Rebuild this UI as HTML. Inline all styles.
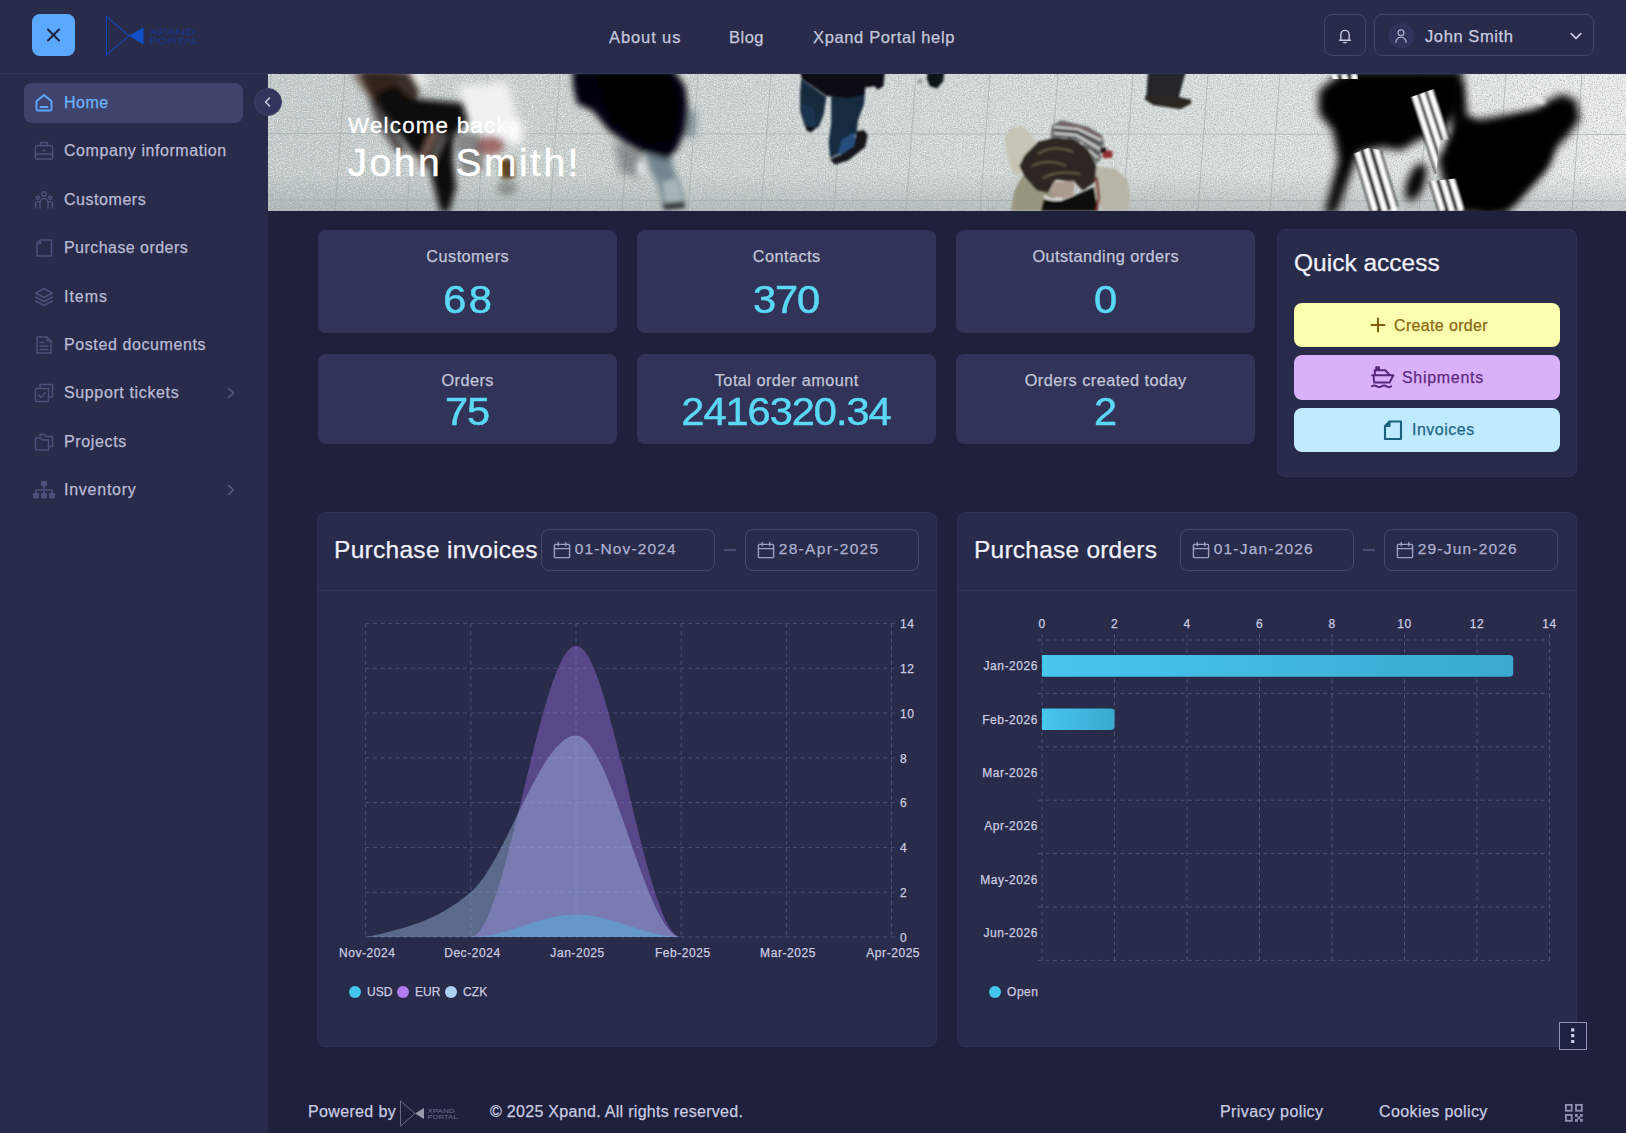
<!DOCTYPE html>
<html lang="en">
<head>
<meta charset="utf-8">
<title>Xpand Portal</title>
<style>
*{box-sizing:border-box;margin:0;padding:0}
html,body{width:1626px;height:1133px;overflow:hidden;background:#1e203c;font-family:"Liberation Sans",sans-serif;color:#c9cbe0;-webkit-text-stroke:.25px}
.abs{position:absolute}
#header{position:absolute;left:0;top:0;width:1626px;height:74px;background:#292b4b;border-bottom:1px solid #30325a}
#sidebar{z-index:3;position:absolute;left:0;top:74px;width:268px;height:1059px;background:#292b4b}
#closebtn{position:absolute;left:32px;top:14px;width:43px;height:42px;border-radius:8px;background:#5aa9ff}
.nav{position:absolute;top:27.6px;font-size:16.5px;color:#c5c7dc;letter-spacing:.2px;white-space:nowrap}
.mi{position:absolute;left:24px;width:219px;height:40px;border-radius:8px;font-size:16px;color:#b9bbd5;white-space:nowrap}
.mi span{position:absolute;left:40px;top:11px}
.mi svg.ic{position:absolute;left:9px;top:9px}
.mi svg.ch{position:absolute;left:201px;top:13px}
.mi.act{background:#40446d;color:#6cb4ff}
#banner{position:absolute;left:268px;top:74px;width:1358px;height:137px;overflow:hidden;background:#cfd4d2}
.card{position:absolute;background:#313458;border-radius:8px;text-align:center;width:299px}
.card .l{position:absolute;left:0;right:0;font-size:16.3px;color:#c3c5da;letter-spacing:.45px;text-indent:.45px}
.card .v{position:absolute;left:0;right:0;font-size:38.5px;color:#5ad8f5;-webkit-text-stroke:.55px #5ad8f5;transform:scaleX(1.08);transform-origin:50% 50%}
.panel{position:absolute;background:#292b4b;border:1px solid #2f3254;border-radius:8px}
.qb{position:absolute;left:1294px;width:266px;height:44.4px;border-radius:8px;font-size:16px;white-space:nowrap}
.ptitle{position:absolute;margin-top:.6px;font-size:24.5px;color:#f0f1fa;white-space:nowrap}
.date{position:absolute;top:529px;width:174px;height:42px;border:1px solid #45486f;border-radius:8px;font-size:15.5px;color:#adb0cf}
.date span{position:absolute;left:32.700px;top:10px;white-space:nowrap}
.date svg{position:absolute;left:10.500px;top:11.300px}
.foot{position:absolute;top:1103.2px;font-size:16px;color:#c9cbe0;white-space:nowrap}
</style>
</head>
<body>
<div id="header">
<div id="closebtn"><svg width="43" height="42" viewBox="0 0 43 42"><path d="M16 15.5 L27 26.5 M27 15.5 L16 26.5" stroke="#1e2340" stroke-width="2.1" stroke-linecap="round" fill="none"/></svg></div>
<svg class="abs" style="left:104px;top:14px" width="100" height="44" viewBox="0 0 100 44">
<path d="M2.5 2.5 L2.5 41 L25 21.8 Z" fill="none" stroke="#1046b8" stroke-width="1.1"/>
<path d="M25 21.8 L39.5 13.5 L39.5 30.5 Z" fill="#0f4fc8"/>
<text x="45.5" y="20.6" font-family="Liberation Sans, sans-serif" font-size="8.6" fill="#13368e" textLength="46" lengthAdjust="spacingAndGlyphs">XPAND</text>
<text x="45.5" y="30.2" font-family="Liberation Sans, sans-serif" font-size="8.6" fill="#13368e" textLength="50" lengthAdjust="spacingAndGlyphs">PORTAL</text>
</svg>
<div class="nav" style="left:609px;letter-spacing:.9px">About us</div>
<div class="nav" style="left:729px;letter-spacing:.5px">Blog</div>
<div class="nav" style="left:813px;letter-spacing:.64px">Xpand Portal help</div>
<div class="abs" style="left:1324px;top:14px;width:42px;height:42px;border:1px solid #43466c;border-radius:8px">
<svg width="40" height="40" viewBox="0 0 40 40"><path d="M14.6 25.2 H25.4 M15.9 25 V19.5 A4.1 4.1 0 0 1 24.1 19.500 V25 M18.6 27.6 H21.4" fill="none" stroke="#c9cbe0" stroke-width="1.4" stroke-linecap="round" stroke-linejoin="round"/></svg></div>
<div class="abs" style="left:1374px;top:14px;width:220px;height:42px;border:1px solid #43466c;border-radius:8px">
<div class="abs" style="left:13px;top:8px;width:26px;height:26px;border-radius:13px;background:#30335a"></div>
<svg class="abs" style="left:13px;top:8px" width="26" height="26" viewBox="0 0 26 26"><circle cx="13" cy="9.800" r="2.9" fill="none" stroke="#a9acc8" stroke-width="1.3"/><path d="M7.9 19.2 A5.1 5.1 0 0 1 18.1 19.2" fill="none" stroke="#a9acc8" stroke-width="1.3" stroke-linecap="round"/></svg>
<div class="abs" style="left:50px;top:11.6px;font-size:16.5px;color:#c9cbe0;letter-spacing:.6px;white-space:nowrap">John Smith</div>
<svg class="abs" style="left:194px;top:15px" width="14" height="12" viewBox="0 0 14 12"><path d="M2.2 3.600 L7 8.4 L11.8 3.600" fill="none" stroke="#c9cbe0" stroke-width="1.7" stroke-linecap="round" stroke-linejoin="round"/></svg>
</div>
</div>
<div id="sidebar">
<div class="mi act" style="top:9.0px"><svg class="ic" width="22" height="22" viewBox="0 0 22 22" fill="none" stroke="#5aa9ff" stroke-width="1.9" stroke-linejoin="round" stroke-linecap="round"><path d="M3.5 9.300 L11 3 L18.5 9.300 V17.2 A1.300 1.300 0 0 1 17.2 18.500 H4.800 A1.300 1.300 0 0 1 3.500 17.2 Z"/><path d="M7.5 15 H14.5"/></svg><span style="letter-spacing:0.5px">Home</span></div>
<div class="mi" style="top:57.4px"><svg class="ic" width="22" height="22" viewBox="0 0 22 22" fill="none" stroke="#4d5079" stroke-width="1.5" stroke-linejoin="round" stroke-linecap="round" ><rect x="2.500" y="5.700" width="17" height="13.300" rx=".8"/><path d="M7.500 5.700 V2.500 H14.500 V5.700 M2.500 14 H19.500 M10 10.500 H12"/></svg><span style="letter-spacing:0.56px">Company information</span></div>
<div class="mi" style="top:105.8px"><svg class="ic" width="22" height="22" viewBox="0 0 22 22" fill="none" stroke="#4d5079" stroke-width="1.5" stroke-linejoin="round" stroke-linecap="round" ><circle cx="11" cy="5" r="2.200"/><circle cx="4.800" cy="8.800" r="1.600"/><circle cx="17.2" cy="8.800" r="1.600"/><path d="M7 19 V13.500 A4 4 0 0 1 15 13.500 V19 M2.500 19 V15 A2.300 2.300 0 0 1 5.800 12.800 M19.500 19 V15 A2.300 2.300 0 0 0 16.200 12.800"/></svg><span style="letter-spacing:0.55px">Customers</span></div>
<div class="mi" style="top:154.1px"><svg class="ic" width="22" height="22" viewBox="0 0 22 22" fill="none" stroke="#4d5079" stroke-width="1.5" stroke-linejoin="round" stroke-linecap="round" ><path d="M7.500 3 H18.500 V19 H4 V6.500 Z M7.500 3 V6.500 H4"/></svg><span style="letter-spacing:0.45px">Purchase orders</span></div>
<div class="mi" style="top:202.5px"><svg class="ic" width="22" height="22" viewBox="0 0 22 22" fill="none" stroke="#4d5079" stroke-width="1.5" stroke-linejoin="round" stroke-linecap="round" ><path d="M11 2.500 L19.500 7 L11 11.500 L2.500 7 Z M2.500 11 L11 15.500 L19.500 11 M2.500 15 L11 19.500 L19.500 15"/></svg><span style="letter-spacing:0.95px">Items</span></div>
<div class="mi" style="top:250.9px"><svg class="ic" width="22" height="22" viewBox="0 0 22 22" fill="none" stroke="#4d5079" stroke-width="1.5" stroke-linejoin="round" stroke-linecap="round" ><path d="M4 3 H14 L18 7 V19 H4 Z M14 3 V7 H18 M7 8.500 H11 M7 12 H15 M7 15.500 H15"/></svg><span style="letter-spacing:0.6px">Posted documents</span></div>
<div class="mi" style="top:299.2px"><svg class="ic" width="22" height="22" viewBox="0 0 22 22" fill="none" stroke="#4d5079" stroke-width="1.5" stroke-linejoin="round" stroke-linecap="round" ><path d="M7 6.500 V2.500 H19.500 V15 H15.500"/><rect x="2.500" y="6.500" width="13" height="13"/><path d="M5.500 13 L8 15.500 L12.500 10.500"/></svg><span style="letter-spacing:0.63px">Support tickets</span><svg class="ch" width="12" height="14" viewBox="0 0 12 14"><path d="M3.500 2.500 L8.500 7 L3.500 11.500" fill="none" stroke="#5a5d85" stroke-width="1.500" stroke-linecap="round" stroke-linejoin="round"/></svg></div>
<div class="mi" style="top:347.6px"><svg class="ic" width="22" height="22" viewBox="0 0 22 22" fill="none" stroke="#4d5079" stroke-width="1.5" stroke-linejoin="round" stroke-linecap="round" ><path d="M7 6.500 V3.500 H11.500 L13 5.500 H19.500 V15.500 H15.500"/><path d="M2.500 7 H7.500 L9 9 H15.500 V19 H2.500 Z"/></svg><span style="letter-spacing:0.63px">Projects</span></div>
<div class="mi" style="top:396.0px"><svg class="ic" width="24" height="22" viewBox="0 0 24 22" style="left:8px"><g fill="#4d5079"><rect x="9" y="2" width="6" height="5.500" rx="1"/><rect x="1" y="14" width="6" height="5.500" rx="1"/><rect x="9" y="14" width="6" height="5.500" rx="1"/><rect x="17" y="14" width="6" height="5.500" rx="1"/></g><path d="M12 7.500 V14 M4 14 V11 H20 V14" fill="none" stroke="#4d5079" stroke-width="1.500"/></svg><span style="letter-spacing:0.75px">Inventory</span><svg class="ch" width="12" height="14" viewBox="0 0 12 14"><path d="M3.500 2.500 L8.500 7 L3.500 11.500" fill="none" stroke="#5a5d85" stroke-width="1.500" stroke-linecap="round" stroke-linejoin="round"/></svg></div>
<div class="abs" style="left:254px;top:14px;width:28px;height:28px;border-radius:14px;background:#33365c;border:1px solid #3e416a"><svg width="26" height="26" viewBox="0 0 26 26"><path d="M14.500 9 L10.500 13 L14.500 17" fill="none" stroke="#c9cbe0" stroke-width="1.600" stroke-linecap="round" stroke-linejoin="round"/></svg></div>
</div>
<div id="banner"><svg width="1358" height="137" viewBox="0 0 1358 137" style="position:absolute;left:0;top:0">
<defs>
<filter id="b1" x="-20%" y="-20%" width="140%" height="140%"><feGaussianBlur stdDeviation="0.9"/></filter>
<filter id="b2" x="-20%" y="-20%" width="140%" height="140%"><feGaussianBlur stdDeviation="2"/></filter>
<filter id="b3" x="-30%" y="-30%" width="160%" height="160%"><feGaussianBlur stdDeviation="3"/></filter>
<filter id="b4" x="-30%" y="-30%" width="160%" height="160%"><feGaussianBlur stdDeviation="4"/></filter>
<filter id="b7" x="-40%" y="-40%" width="180%" height="180%"><feGaussianBlur stdDeviation="7"/></filter>
<filter id="nzd" x="0" y="0" width="100%" height="100%"><feTurbulence type="fractalNoise" baseFrequency="0.75" numOctaves="2" seed="3"/><feColorMatrix type="matrix" values="0 0 0 0 0.42  0 0 0 0 0.47  0 0 0 0 0.47  3.2 0 0 0 -1.45"/></filter>
<filter id="nzl" x="0" y="0" width="100%" height="100%"><feTurbulence type="fractalNoise" baseFrequency="0.75" numOctaves="2" seed="11"/><feColorMatrix type="matrix" values="0 0 0 0 1  0 0 0 0 1  0 0 0 0 1  3.2 0 0 0 -1.45"/></filter>
<linearGradient id="fl" x1="0" x2="1" y1="0" y2="0"><stop offset="0" stop-color="#bfc8c6"/><stop offset="0.3" stop-color="#c8d0ce"/><stop offset="0.7" stop-color="#d5dbd9"/><stop offset="0.88" stop-color="#e0e5e4"/><stop offset="1" stop-color="#e9edec"/></linearGradient>
<linearGradient id="vg" x1="0" x2="0" y1="0" y2="1"><stop offset="0" stop-color="#8f9a99" stop-opacity="0"/><stop offset=".72" stop-color="#8f9a99" stop-opacity="0"/><stop offset="1" stop-color="#8f9a99" stop-opacity=".4"/></linearGradient>
<clipPath id="st1a"><polygon points="1100,38 1180,10 1230,10 1230,62 1172,66 1168,100 1100,100"/></clipPath>
<clipPath id="st1b"><polygon points="1150,140 1155,108 1192,104 1210,140"/></clipPath>
<clipPath id="st2"><polygon points="1060,0 1090,0 1090,5 1060,5"/><polygon points="1080,82 1100,74 1135,80 1140,140 1080,140"/></clipPath>
</defs>
<rect width="1358" height="137" fill="url(#fl)"/>
<rect width="1358" height="137" filter="url(#nzd)" opacity=".8"/>
<rect width="1358" height="137" filter="url(#nzl)" opacity=".55"/>
<g stroke="#a9b2b0" stroke-width="1" opacity=".75" fill="none"><path d="M3 0 L-7 137"/><path d="M77 0 L67 137"/><path d="M149 0 L139 137"/><path d="M220 0 L210 137"/><path d="M292 0 L282 137"/><path d="M364 0 L354 137"/><path d="M430 0 L420 137"/><path d="M503 0 L493 137"/><path d="M576 0 L566 137"/><path d="M648 0 L638 137"/><path d="M722 0 L712 137"/><path d="M790 0 L780 137"/><path d="M865 0 L855 137"/><path d="M940 0 L930 137"/><path d="M1012 0 L1002 137"/><path d="M1086 0 L1076 137"/><path d="M1161 0 L1151 137"/><path d="M1238 0 L1228 137"/><path d="M1314 0 L1304 137"/><path d="M0 59.5 L1358 60.5"/><path d="M0 126 L1358 127"/></g>
<rect width="1358" height="137" fill="url(#vg)"/>
<g filter="url(#b4)">
<polygon points="83,-3 128,-3 136,20 112,32 95,15" fill="#5c4739" opacity=".85"/>
<ellipse cx="144" cy="6" rx="16" ry="10" fill="#eef0ee" opacity=".9"/>
<polygon points="190,12 240,8 250,50 232,66 200,56" fill="#f4f6f5" opacity=".9"/>
<ellipse cx="246" cy="58" rx="10" ry="13" fill="#ffffff" opacity=".9"/>
</g>
<g filter="url(#b3)">
<polygon points="92,-3 140,-3 152,18 142,32 114,36 101,18" fill="#2a1d16" opacity=".92"/>
<polygon points="107.5,21 127,11 141,24 194,29 200,47 186,62 185,85 188,113 181,138 172.5,138 162.6,99 141,73.5 127,54 113,35" fill="#0a0908"/>
<polygon points="100,22 112,30 128,58 140,80 128,78 108,48" fill="#1d1613" opacity=".7"/>
<path d="M168 56 L150 94" stroke="#a98176" stroke-width="5" opacity=".8"/>
<path d="M176 60 L160 96" stroke="#d9d2cc" stroke-width="3" opacity=".6"/>
<ellipse cx="222" cy="72" rx="14" ry="9" fill="#98595a" opacity=".85"/>
<polygon points="186,58 212,60 216,95 195,102" fill="#595755" opacity=".6"/>
<ellipse cx="239" cy="114" rx="10" ry="8" fill="#6d7371" opacity=".6"/>
</g>
<g filter="url(#b2)"><polygon points="231,86 246,84 247,104 234,105" fill="#5e4324"/></g>
<g filter="url(#b4)">
<polygon points="345.8,66 376.6,76 372,104.6 352,98.4" fill="#4e5555" opacity=".55"/>
<polygon points="417,34 428,38 426,62 416,64" fill="#3c5060" opacity=".6"/>
</g>
<g filter="url(#b3)">
<polygon points="377.8,80 402.4,82 407.3,98.4 413.5,116.9 415.9,130.4 396.2,134.1 390.1,110.7 380.2,93.5" fill="#74868f"/>
<polygon points="304,-4 406,-4 417.1,12.3 419.6,30.8 417.1,55.4 409.8,73.8 399.9,86.1 376.6,78.7 358.1,68.9 340.9,56.6 324.9,36.9 308.9,29.5 305.2,12.3" fill="#030508"/>
<polygon points="325,-4 400,-4 410,30 404,66 380,70 345,48" fill="#000"/>
<ellipse cx="373" cy="94" rx="4" ry="8" fill="#f2f5f5" opacity=".9"/>
</g>
<g filter="url(#b2)"><polygon points="394,108 409,104 415.9,128 398,132" fill="#a7b5b8"/><polygon points="395,129 416,127 417,134 396.2,136" fill="#32393c"/></g>
<g filter="url(#b1)">
<polygon points="533.3,4.9 558.3,23.1 555.8,40.2 551,52.4 542.4,57.2 536.4,51.2 532.1,36.5 532.1,18.3" fill="#16293d"/>
<polygon points="534,30 545,34 548,50 542.4,57.2 536.4,51.2" fill="#1c3450"/>
<polygon points="563.2,23.1 597.3,14.6 596,30.4 590,46.3 588.7,58.5 575.3,77.9 562,84 560.7,68.2 563.2,48.7" fill="#172b40"/>
<polygon points="574,66 586,58 588,70 578,80 570,80" fill="#27507f"/>
<polygon points="588.7,57.2 596,56 599.7,60.9 597.3,73 580.2,86.5 566.8,90.7 562,85.3 575.3,79.2 586,72" fill="#14181d"/>
<polygon points="538,52 548,54 543,58.5 538,56" fill="#0d1116"/>
<polygon points="532,-2 616.7,-2 615.5,12.2 609.4,15.8 607,12.2 597.3,13.4 596,20.7 580.2,24.4 558.3,21.9 534,4.9" fill="#0a0d12"/>
<polygon points="659.4,-2 676.4,-2 675.2,7.3 669.1,14.6 661.8,12.2 658.8,4.9" fill="#101418"/>
<circle cx="652" cy="7.300" r="2.500" fill="#9aa09f"/>
<polygon points="879.8,-2 917.7,-2 910.9,23 878.4,23" fill="#25282b"/>
<polygon points="877.1,21.6 910.9,23 923.1,25.7 923.1,29.8 912.2,35.2 885.2,31.1 877.1,25.7" fill="#2a2624"/>
</g>
<g filter="url(#b1)">
<polygon points="751.2,106.9 756.6,100 772,110 790,120 775.6,137 743.1,137 745.8,119.1" fill="#98967f"/>
<polygon points="736.4,63.6 743.1,54.1 753.9,52.1 762.1,58.2 768.8,70.4 756,83.9 753,102 744.5,100.1 739.1,81.2" fill="#c6c4b4"/>
<polygon points="826,92 847.3,94.7 859.5,105.5 862.2,121.8 859.5,137 836,137 826,121.8" fill="#b7b5a6"/>
<polygon points="783.7,51.4 793.2,46 820.2,52.8 833.8,60.9 836.5,70.4 831.1,75.8 833.8,83.9 828.4,90 814.8,72 795.9,64 782.4,65" fill="#6f7273"/>
<g stroke="#e6e8e6" stroke-width="1.500" fill="none"><path d="M786 53 L810 55 L833 66"/><path d="M786 59 L808 61 L832 75"/><path d="M812 68 L830 84"/></g>
<g stroke="#23262a" stroke-width="1.300" fill="none"><path d="M786 56 L809 58 L833 70.500"/><path d="M800 63.500 L831 80"/></g>
<path d="M792 49 L820 56 L834 64" stroke="#8a4a4a" stroke-width="1.200" fill="none"/>
<polygon points="756.6,81.2 770.2,67.7 787.8,63.6 806.7,66.3 820.2,75.8 828.4,92 827,108.2 814.8,116.4 806.7,108.2 787.8,105.5 779.7,119.1 768.8,116.4 756.6,102.8 751.2,92" fill="#2f2820"/>
<path d="M770 80 Q785 70 805 78 M764 92 Q780 84 798 92 M775 104 Q790 96 812 100" stroke="#6b604f" stroke-width="2.200" fill="none" opacity=".8"/>
<polygon points="775.6,125.8 793.2,127.2 806.7,121.8 826,113 830,137 772.9,137" fill="#0c0c0e"/>
<polygon points="785,108.2 806.7,106.9 805.4,121.8 793.2,125.8 782.4,119.1" fill="#ab9a8e"/>
<path d="M776 122 Q784 128 794 124" stroke="#e4e2dc" stroke-width="2.200" fill="none"/>
<polygon points="833.8,75.8 844.6,77 844,84 835,84" fill="#8e2f30"/>
<polygon points="832,74 838,73 838,78 832,79" fill="#141416"/>
<path d="M828.4 103 L831 124 L828 137" stroke="#7a2a2a" stroke-width="2.400" fill="none"/>
</g>
<g filter="url(#b4)">
<polygon points="1050.8,17 1067.7,2.8 1085,-4 1195,-4 1192.2,34 1175.2,56.6 1152.6,65 1132.8,76.4 1113,73.5 1090.4,79.2 1067.7,140 1056.4,140 1070.6,84.9 1064.9,56.6 1050.8,39.6" fill="#010204"/>
<polygon points="1195,48 1265.7,36.8 1277,28.3 1294,20 1308.2,26 1312,45.3 1299.7,62.2 1288.4,73.5 1277,96.2 1251.6,124.5 1237.5,140 1192.2,140 1175.2,107.5 1169.6,84.9 1180.9,67.9" fill="#010204"/>
<ellipse cx="1148" cy="108" rx="8.500" ry="20" fill="#020305" transform="rotate(20 1148 108)"/>
</g>
<g clip-path="url(#st1a)"><g filter="url(#b1)"><path d="M1148 0 L1193 137" stroke="#121518" stroke-width="25.4"/><path d="M1139.4 0 L1184.4 137" stroke="#ffffff" stroke-width="5.2"/><path d="M1148 0 L1193 137" stroke="#ffffff" stroke-width="5.2"/><path d="M1156.6 0 L1201.6 137" stroke="#ffffff" stroke-width="5.2"/></g></g>
<g clip-path="url(#st1b)"><g filter="url(#b1)"><path d="M1142 0 L1184 137" stroke="#121518" stroke-width="27.0"/><path d="M1132.6 0 L1174.6 137" stroke="#ffffff" stroke-width="5.2"/><path d="M1142 0 L1184 137" stroke="#ffffff" stroke-width="5.2"/><path d="M1151.4 0 L1193.4 137" stroke="#ffffff" stroke-width="5.2"/></g></g>
<g clip-path="url(#st2)"><g filter="url(#b1)"><path d="M1075.7 0 L1117 137" stroke="#121518" stroke-width="28.0"/><path d="M1065.9 0 L1107.2 137" stroke="#ffffff" stroke-width="5.4"/><path d="M1075.7 0 L1117 137" stroke="#ffffff" stroke-width="5.4"/><path d="M1085.5 0 L1126.8 137" stroke="#ffffff" stroke-width="5.4"/></g></g>
<g filter="url(#b4)">
<polygon points="1206,60 1260,40 1290,40 1280,90 1245,128 1215,140 1205,100" fill="#010204"/>
<polygon points="1180,8 1195,8 1199,40 1212,52 1210,80 1186,100 1180,72 1184,60" fill="#010204"/>
</g>
<g filter="url(#b2)"><ellipse cx="1272" cy="27" rx="6" ry="3" fill="#f3f6f6" transform="rotate(20 1272 27)"/></g>
</svg>
<div class="abs" style="left:80px;top:38.900px;font-size:22.3px;color:#fff;letter-spacing:1.25px;white-space:nowrap;-webkit-text-stroke:.3px #fff">Welcome back,</div>
<div class="abs" style="left:79.500px;top:66.600px;font-size:39px;color:#fff;letter-spacing:2.5px;white-space:nowrap;-webkit-text-stroke:.4px #fff">John Smith!</div>
</div>
<div id="main">
<div class="card" style="left:318px;top:230px;height:103px"><div class="l" style="top:17.4px">Customers</div><div class="v" style="top:47.5px;letter-spacing:2.1px;text-indent:2.1px">68</div></div>
<div class="card" style="left:637px;top:230px;height:103px"><div class="l" style="top:17.4px">Contacts</div><div class="v" style="top:47.5px;letter-spacing:-1px;text-indent:-1px">370</div></div>
<div class="card" style="left:956px;top:230px;height:103px"><div class="l" style="top:17.4px">Outstanding orders</div><div class="v" style="top:47.5px;letter-spacing:0px;text-indent:0px">0</div></div>
<div class="card" style="left:318px;top:354px;height:90px"><div class="l" style="top:17.4px">Orders</div><div class="v" style="top:35.7px;letter-spacing:-1px;text-indent:-1px">75</div></div>
<div class="card" style="left:637px;top:354px;height:90px"><div class="l" style="top:17.4px">Total order amount</div><div class="v" style="top:35.7px;letter-spacing:-0.97px;text-indent:-0.97px">2416320.34</div></div>
<div class="card" style="left:956px;top:354px;height:90px"><div class="l" style="top:17.4px">Orders created today</div><div class="v" style="top:35.7px;letter-spacing:0px;text-indent:0px">2</div></div>
<div class="panel" style="left:1277px;top:229px;width:300px;height:248px"></div>
<div class="ptitle" style="left:1294px;top:248px">Quick access</div>
<div class="qb" style="top:303px;background:#fafcae;color:#8a6a12"><svg class="abs" style="left:75px;top:13px" width="18" height="18" viewBox="0 0 18 18"><path d="M9 2.500 V15.500 M2.500 9 H15.500" stroke="#7f5f0c" stroke-width="2" stroke-linecap="round"/></svg><span class="abs" style="left:100px;top:13.5px;letter-spacing:.35px">Create order</span></div>
<div class="qb" style="top:355.3px;background:#d9b0fa;color:#5d2b80"><svg class="abs" style="left:76.5px;top:10.700px" width="24" height="22" viewBox="0 0 24 22" fill="none" stroke="#55267a" stroke-width="1.950" stroke-linejoin="round" stroke-linecap="round"><path d="M5.200 4 V1.300 H8 V4 Z" fill="#55267a"/><path d="M3.800 9 V4.200 H14.300 L18.400 9"/><path d="M1.200 9.200 H22.300 L18.600 16.500 H3.200 L2.400 9.200"/><path d="M1 20.300 Q3.400 18.500 5.800 20.300 T10.600 20.300 T15.400 20.300 T20.200 20.300"/></svg><span class="abs" style="left:108px;top:13.7px;letter-spacing:.7px">Shipments</span></div>
<div class="qb" style="top:407.7px;background:#bfeaff;color:#1f6786"><svg class="abs" style="left:88px;top:11px" width="22" height="22" viewBox="0 0 22 22" fill="none" stroke="#1a617e" stroke-width="2.100" stroke-linejoin="round"><path d="M7.500 2.500 H19 V20 H3 V7 Z M7.500 2.500 V7 H3"/></svg><span class="abs" style="left:118px;top:13.5px;letter-spacing:.5px">Invoices</span></div>
<div class="panel" style="left:317px;top:512px;width:620px;height:535px"><div class="abs" style="left:0;top:77px;width:618px;height:1px;background:#32355a"></div></div>
<div class="panel" style="left:957px;top:512px;width:620px;height:535px"><div class="abs" style="left:0;top:77px;width:618px;height:1px;background:#32355a"></div></div>
<div class="ptitle" style="left:334px;top:535px;letter-spacing:.29px">Purchase invoices</div>
<div class="ptitle" style="left:974px;top:535px;letter-spacing:.23px">Purchase orders</div>
<div class="date" style="left:541px"><svg width="18" height="18" viewBox="0 0 19 19" fill="none" stroke="#9da0bf" stroke-width="1.450" stroke-linejoin="round" stroke-linecap="round"><rect x="1.500" y="3.500" width="16" height="14" rx="1"/><path d="M1.500 8 H17.500 M5.500 1.500 V5 M13.500 1.500 V5"/></svg><span style="letter-spacing:1.14px">01-Nov-2024</span></div>
<div class="date" style="left:745px"><svg width="18" height="18" viewBox="0 0 19 19" fill="none" stroke="#9da0bf" stroke-width="1.450" stroke-linejoin="round" stroke-linecap="round"><rect x="1.500" y="3.500" width="16" height="14" rx="1"/><path d="M1.500 8 H17.500 M5.500 1.500 V5 M13.500 1.500 V5"/></svg><span style="letter-spacing:1.33px">28-Apr-2025</span></div>
<div class="date" style="left:1180px"><svg width="18" height="18" viewBox="0 0 19 19" fill="none" stroke="#9da0bf" stroke-width="1.450" stroke-linejoin="round" stroke-linecap="round"><rect x="1.500" y="3.500" width="16" height="14" rx="1"/><path d="M1.500 8 H17.500 M5.500 1.500 V5 M13.500 1.500 V5"/></svg><span style="letter-spacing:1.2px">01-Jan-2026</span></div>
<div class="date" style="left:1384px"><svg width="18" height="18" viewBox="0 0 19 19" fill="none" stroke="#9da0bf" stroke-width="1.450" stroke-linejoin="round" stroke-linecap="round"><rect x="1.500" y="3.500" width="16" height="14" rx="1"/><path d="M1.500 8 H17.500 M5.500 1.500 V5 M13.500 1.500 V5"/></svg><span style="letter-spacing:1.2px">29-Jun-2026</span></div>
<div class="abs" style="left:724px;top:549px;width:12px;height:2px;background:#4a4d74"></div>
<div class="abs" style="left:1363px;top:549px;width:12px;height:2px;background:#4a4d74"></div>
<svg class="abs" id="charts" style="left:0;top:0" width="1626" height="1133" viewBox="0 0 1626 1133" font-family="Liberation Sans, sans-serif">
<g stroke="#4c4f76" stroke-width="1" stroke-dasharray="4 3.5" fill="none"><path d="M365.6 623.4 V937"/><path d="M470.8 623.4 V937"/><path d="M576.0 623.4 V937"/><path d="M681.2 623.4 V937"/><path d="M786.4 623.4 V937"/><path d="M891.6 623.4 V937"/><path d="M365.6 937.0 H897.6"/><path d="M365.6 892.2 H897.6"/><path d="M365.6 847.4 H897.6"/><path d="M365.6 802.6 H897.6"/><path d="M365.6 757.8 H897.6"/><path d="M365.6 713.0 H897.6"/><path d="M365.6 668.2 H897.6"/><path d="M365.6 623.4 H897.6"/></g>
<path d="M365.6 937.0 C400.7 937.0 435.7 937.0 470.8 937.0 C505.9 937.0 540.9 645.8 576.0 645.8 C611.1 645.8 646.1 937.0 681.2 937.0 C716.3 937.0 751.3 937.0 786.4 937.0 C821.5 937.0 856.5 937.0 891.6 937.0 Z" fill="#a879f0" fill-opacity=".38"/>
<path d="M365.6 937.0 C400.7 929.5 435.7 922.1 470.8 892.2 C505.9 862.3 540.9 735.4 576.0 735.4 C611.1 735.4 646.1 937.0 681.2 937.0 C716.3 937.0 751.3 937.0 786.4 937.0 C821.5 937.0 856.5 937.0 891.6 937.0 Z" fill="#aed0f5" fill-opacity=".38"/>
<path d="M365.6 937.0 C400.7 937.0 435.7 937.0 470.8 937.0 C505.9 937.0 540.9 914.6 576.0 914.6 C611.1 914.6 646.1 937.0 681.2 937.0 C716.3 937.0 751.3 937.0 786.4 937.0 C821.5 937.0 856.5 937.0 891.6 937.0 Z" fill="#45c4ec" fill-opacity=".38"/>
<g font-size="12" fill="#c9cbe0" stroke="#c9cbe0" stroke-width=".25" letter-spacing=".55"><text x="367.2" y="956.5" text-anchor="middle">Nov-2024</text><text x="472.4" y="956.5" text-anchor="middle">Dec-2024</text><text x="577.6" y="956.5" text-anchor="middle">Jan-2025</text><text x="682.8" y="956.5" text-anchor="middle">Feb-2025</text><text x="788.0" y="956.5" text-anchor="middle">Mar-2025</text><text x="893.2" y="956.5" text-anchor="middle">Apr-2025</text><text x="900" y="941.8">0</text><text x="900" y="897.0">2</text><text x="900" y="852.2">4</text><text x="900" y="807.4">6</text><text x="900" y="762.6">8</text><text x="900" y="717.8">10</text><text x="900" y="673.0">12</text><text x="900" y="628.2">14</text><text x="367" y="996.3" letter-spacing=".1">USD</text><text x="415" y="996.3" letter-spacing=".1">EUR</text><text x="463" y="996.3" letter-spacing=".1">CZK</text></g>
<circle cx="355" cy="992" r="6" fill="#45c4ec"/><circle cx="403" cy="992" r="6" fill="#b07cf0"/><circle cx="451" cy="992" r="6" fill="#aed0f5"/>
<g stroke="#4c4f76" stroke-width="1" stroke-dasharray="4 3.5" fill="none"><path d="M1042.0 634 V960.4"/><path d="M1114.5 634 V960.4"/><path d="M1187.0 634 V960.4"/><path d="M1259.5 634 V960.4"/><path d="M1332.0 634 V960.4"/><path d="M1404.5 634 V960.4"/><path d="M1477.0 634 V960.4"/><path d="M1549.5 634 V960.4"/><path d="M1038 640.0 H1549.5"/><path d="M1038 693.4 H1549.5"/><path d="M1038 746.8 H1549.5"/><path d="M1038 800.2 H1549.5"/><path d="M1038 853.6 H1549.5"/><path d="M1038 907.0 H1549.5"/><path d="M1038 960.4 H1549.5"/></g>
<defs><linearGradient id="bg1" x1="0" x2="1" y1="0" y2="0"><stop offset="0" stop-color="#47c6ee"/><stop offset="1" stop-color="#3aa9d1"/></linearGradient></defs>
<path d="M1042 655.1 H1509.25 a4 4 0 0 1 4 4 V672.7 a4 4 0 0 1 -4 4 H1042 Z" fill="url(#bg1)"/>
<path d="M1042 708.4 H1110.5 a4 4 0 0 1 4 4 V726.0 a4 4 0 0 1 -4 4 H1042 Z" fill="url(#bg1)"/>
<g font-size="12" fill="#c9cbe0" stroke="#c9cbe0" stroke-width=".25" letter-spacing=".55"><text x="1042.0" y="627.8" text-anchor="middle">0</text><text x="1114.5" y="627.8" text-anchor="middle">2</text><text x="1187.0" y="627.8" text-anchor="middle">4</text><text x="1259.5" y="627.8" text-anchor="middle">6</text><text x="1332.0" y="627.8" text-anchor="middle">8</text><text x="1404.5" y="627.8" text-anchor="middle">10</text><text x="1477.0" y="627.8" text-anchor="middle">12</text><text x="1549.5" y="627.8" text-anchor="middle">14</text><text x="1038" y="670.1" text-anchor="end">Jan-2026</text><text x="1038" y="723.5" text-anchor="end">Feb-2026</text><text x="1038" y="776.9" text-anchor="end">Mar-2026</text><text x="1038" y="830.3" text-anchor="end">Apr-2026</text><text x="1038" y="883.7" text-anchor="end">May-2026</text><text x="1038" y="937.1" text-anchor="end">Jun-2026</text><text x="1007" y="996">Open</text></g>
<circle cx="995" cy="992" r="6" fill="#45c4ec"/>
</svg>
<div class="abs" style="left:1559.300px;top:1022.100px;width:27.800px;height:27.800px;border:1.100px solid #9092b4;background:#1f2140"><svg class="abs" style="left:0;top:0" width="25.400" height="25.400" viewBox="0 0 25.400 25.400"><g fill="#cfd1e6"><rect x="11.100" y="5.300" width="3.200" height="3.200" rx=".6"/><rect x="11.100" y="11.100" width="3.200" height="3.200" rx=".6"/><rect x="11.100" y="16.900" width="3.200" height="3.200" rx=".6"/></g></svg></div>
<div class="foot" style="left:308px;letter-spacing:.35px">Powered by</div>
<svg class="abs" style="left:398px;top:1098.5px" width="64" height="30" viewBox="0 0 64 30"><path d="M2.500 2 L2.500 27 L17 14.500 Z" fill="none" stroke="#6d7088" stroke-width=".9"/><path d="M17 14.500 L26 9 L26 20 Z" fill="#9799ad"/><text x="29.500" y="13.600" font-family="Liberation Sans, sans-serif" font-size="5.800" fill="#6c6f8a" textLength="27" lengthAdjust="spacingAndGlyphs">XPAND</text><text x="29.500" y="20.200" font-family="Liberation Sans, sans-serif" font-size="5.800" fill="#6c6f8a" textLength="30" lengthAdjust="spacingAndGlyphs">PORTAL</text></svg>
<div class="foot" style="left:490px;letter-spacing:.3px">© 2025 Xpand. All rights reserved.</div>
<div class="foot" style="left:1220px;letter-spacing:.4px">Privacy policy</div>
<div class="foot" style="left:1379px;letter-spacing:.4px">Cookies policy</div>
<svg class="abs" style="left:1563.600px;top:1103px" width="20.500" height="20.500" viewBox="0 0 20.500 20.500" fill="none" stroke="#8c8fae" stroke-width="1.900"><rect x="1.900" y="1.900" width="5.800" height="5.800"/><rect x="12" y="1.900" width="5.800" height="5.800"/><rect x="1.900" y="12" width="5.800" height="5.800"/><g fill="#8c8fae" stroke="none"><rect x="11" y="11" width="2.800" height="2.800"/><rect x="16" y="11" width="2.800" height="2.800"/><rect x="13.500" y="13.500" width="2.800" height="2.800"/><rect x="11" y="16" width="2.800" height="2.800"/><rect x="16" y="16" width="2.800" height="2.800"/></g></svg>
</div>
</body>
</html>
